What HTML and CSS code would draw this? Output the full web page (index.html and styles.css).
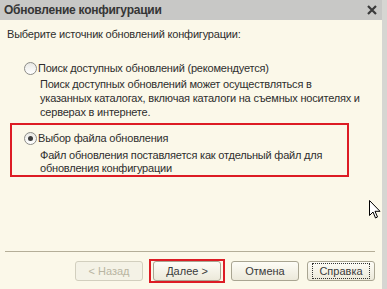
FILE: index.html
```html
<!DOCTYPE html>
<html lang="ru">
<head>
  <meta charset="UTF-8">
  <title>Обновление конфигурации</title>
  <link rel="stylesheet" href="styles.css">
</head>
<body>

<div class="window">
  <!-- Title bar -->
  <div class="titlebar">
    <span class="title">Обновление конфигурации</span>
    <svg class="close" width="10" height="10" viewBox="0 0 10 10">
      <path d="M1 1 L9 9 M9 1 L1 9" stroke="#3a3a3a" stroke-width="2.2"/>
    </svg>
  </div>

  <div class="content">
    <p class="prompt">Выберите источник обновлений конфигурации:</p>

    <div class="option">
      <div class="option-head">
        <span class="radio"></span>
        <span>Поиск доступных обновлений (рекомендуется)</span>
      </div>
      <p class="option-desc">Поиск доступных обновлений может осуществляться в<br>указанных каталогах, включая каталоги на съемных носителях и<br>серверах в интернете.</p>
    </div>

    <div class="option highlight">
      <div class="option-head">
        <span class="radio checked"></span>
        <span>Выбор файла обновления</span>
      </div>
      <p class="option-desc">Файл обновления поставляется как отдельный файл для<br>обновления конфигурации</p>
    </div>
  </div>

  <!-- Buttons -->
  <div class="footer">
    <div class="buttons">
      <button class="btn" disabled>&lt; Назад</button>
      <span class="marked"><button class="btn">Далее &gt;</button></span>
      <button class="btn">Отмена</button>
      <button class="btn focused"><span>Справка</span></button>
    </div>
  </div>

  <svg class="cursor" width="12" height="19" viewBox="0 0 12 19">
    <path d="M0.5 0.5 L0.5 15.5 L4 12 L6.5 18 L8.5 17 L6 11.3 L11 11.3 Z" fill="#fff" stroke="#000" stroke-width="1"/>
  </svg>
</div>

</body>
</html>
```

FILE: styles.css
```css
* {
    margin: 0;
    padding: 0;
    box-sizing: border-box;
}

body {
    font-family: 'Liberation Sans', Arial, sans-serif;
    font-size: 11px;
    letter-spacing: -0.2px;
    color: #2e2e2e;
    background-color: #fbf8e9;
}

.window {
    position: relative;
    width: 387px;
    height: 289px;
    display: flex;
    flex-direction: column;
    border-right: 5px solid #d6d6d2;
    background-color: #fbf8e9;
}

.titlebar {
    height: 20px;
    background-color: #c8c8c6;
    display: flex;
    align-items: center;
    justify-content: space-between;
    padding: 0 4px 0 4px;
}

.title {
    font-weight: bold;
    font-size: 12px;
    letter-spacing: -0.25px;
    color: #353535;
}

.close {
    margin-right: 1px;
}

.content {
    flex: 1;
    padding: 7px 6px 0 7px;
    white-space: nowrap;
}

.prompt {
    line-height: 14px;
    margin-bottom: 20px;
}

.option {
    padding-left: 17px;
    margin-bottom: 4px;
}

.option-head {
    display: flex;
    align-items: center;
    gap: 1px;
    line-height: 14px;
}

.option-desc {
    padding-left: 16px;
    margin-top: 2px;
    line-height: 14px;
}

.radio {
    width: 13px;
    height: 13px;
    border-radius: 50%;
    border: 1px solid #8c8c88;
    background: linear-gradient(#e8e8e4, #ffffff);
    display: flex;
    align-items: center;
    justify-content: center;
}

.radio.checked::after {
    content: "";
    width: 5px;
    height: 5px;
    border-radius: 50%;
    background-color: #3c3c3c;
}

.highlight {
    margin-left: 3px;
    margin-right: 27px;
    padding: 6px 0 0 12px;
    border: 2px solid #dd1c24;
}

.highlight .option-desc {
    margin-top: 4px;
    line-height: 13px;
}

.footer {
    margin: 0 7px 0 5px;
    border-top: 1px solid #b4ae98;
    padding: 7px 0 6px 0;
}

.buttons {
    display: flex;
    justify-content: flex-end;
    align-items: center;
    gap: 8px;
}

.btn {
    width: 68px;
    height: 20px;
    font-family: 'Liberation Sans', Arial, sans-serif;
    font-size: 11px;
    color: #3a3a3a;
    border: 1px solid #a9a592;
    border-radius: 3px;
    background: linear-gradient(#fdfcf6, #ece9da);
}

.btn:disabled {
    color: #b9b5a2;
    border-color: #d2cfbe;
    background: #f4f2e6;
}

.marked {
    border: 2px solid #dd1c24;
    padding: 0 2px;
    margin: 0 -2px;
    display: flex;
}

.focused span {
    border: 1px dotted #333;
    padding: 1px 6px;
}

.cursor {
    position: absolute;
    left: 369px;
    top: 200px;
}
```
